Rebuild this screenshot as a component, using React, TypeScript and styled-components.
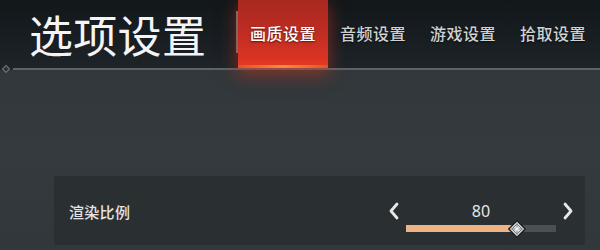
import { FC } from 'react';
import styled, { createGlobalStyle } from 'styled-components';

const GlobalStyle = createGlobalStyle`
  html, body {
    margin: 0;
    padding: 0;
    background: #31373a;
  }
  body {
    font-family: 'Noto Sans CJK SC', 'Noto Sans', sans-serif;
    color: #e8e8e8;
  }
`;

const Screen = styled.div`
  width: 600px;
  height: 250px;
  overflow: hidden;
  display: flex;
  flex-direction: column;
  background: linear-gradient(180deg, #2f3538 0%, #343a3d 60%, #31373a 100%);
`;

const Header = styled.header`
  height: 68px;
  display: flex;
  align-items: center;
  background: linear-gradient(180deg, #12171a 0%, #181e22 60%, #1e2428 100%);
`;

const Title = styled.h1`
  margin: 0;
  padding-left: 29px;
  width: 236px;
  box-sizing: border-box;
  font-size: 44px;
  font-weight: 400;
  line-height: 1;
  color: #f4f4f4;
  letter-spacing: 0.3px;
`;

const Separator = styled.div`
  width: 2px;
  height: 42px;
  background: #70767a;
  align-self: center;
  margin-top: -5px;
`;

const Tabs = styled.nav`
  display: flex;
  height: 100%;
`;

const Tab = styled.div<{ $active?: boolean }>`
  position: relative;
  width: 90px;
  height: 100%;
  display: flex;
  align-items: center;
  justify-content: center;
  font-size: 16px;
  font-weight: 500;
  letter-spacing: 0.5px;
  color: ${({ $active }) => ($active ? '#ffffff' : '#cfd1d2')};
  text-shadow: 0 1px 2px rgba(0, 0, 0, 0.6);
  background: ${({ $active }) =>
    $active
      ? 'linear-gradient(180deg, #a9291f 0%, #bd2c22 45%, #d93423 85%, #e53d22 100%)'
      : 'transparent'};
  box-shadow: ${({ $active }) =>
    $active ? '0 6px 16px 1px rgba(214, 52, 30, 0.5)' : 'none'};
  z-index: ${({ $active }) => ($active ? 1 : 0)};

  &::after {
    content: '';
    display: ${({ $active }) => ($active ? 'block' : 'none')};
    position: absolute;
    left: 0;
    right: 0;
    bottom: 0;
    height: 3px;
    background: linear-gradient(90deg, #e8501f, #ff8a3a 50%, #e8501f);
  }
`;

const TabLabel = styled.span`
  margin-top: -2px;
`;

const Divider = styled.div`
  height: 2px;
  display: flex;
  align-items: center;
  background: #1e2428;
`;

const DividerMark = styled.svg`
  width: 10px;
  height: 10px;
  margin-left: 1px;
  flex: none;
`;

const DividerLine = styled.div`
  flex: 1;
  height: 2px;
  margin-left: 2px;
  background: #5d6367;
`;

const Body = styled.main`
  flex: 1;
  padding: 106px 15px 0 54px;
`;

const Row = styled.div`
  height: 69px;
  display: flex;
  align-items: center;
  justify-content: space-between;
  padding: 0 9px 0 15px;
  background: #2a2f32;
`;

const Label = styled.span`
  font-size: 15px;
  font-weight: 500;
  color: #e4e4e4;
  letter-spacing: 0.3px;
  margin-top: 2px;
`;

const Stepper = styled.div`
  display: flex;
  align-items: flex-start;
  gap: 4px;
  margin-top: 12px;
`;

const ArrowButton = styled.button`
  border: 0;
  padding: 0;
  width: 16px;
  height: 20px;
  background: none;
  display: flex;
  align-items: center;
  justify-content: center;
  cursor: pointer;
`;

const SliderColumn = styled.div`
  width: 150px;
  display: flex;
  flex-direction: column;
  align-items: center;
`;

const Value = styled.span`
  font-family: 'Noto Sans', 'Noto Sans CJK SC', sans-serif;
  font-size: 16px;
  line-height: 20px;
  color: #e6e6e6;
`;

const Track = styled.div`
  position: relative;
  width: 100%;
  height: 7px;
  margin-top: 4px;
  background: #4a5053;
`;

const Fill = styled.div`
  height: 100%;
  background: #eeb385;
`;

const Thumb = styled.svg`
  position: absolute;
  top: 50%;
  width: 18px;
  height: 18px;
  transform: translate(-50%, -50%);
`;

const Chevron: FC<{ dir: 'left' | 'right' }> = ({ dir }) => (
  <svg width="12" height="18" viewBox="0 0 12 18">
    <path
      d={dir === 'left' ? 'M9 2 L3 9 L9 16' : 'M3 2 L9 9 L3 16'}
      fill="none"
      stroke="#e8e8e8"
      strokeWidth="2.8"
      strokeLinecap="round"
      strokeLinejoin="round"
    />
  </svg>
);

const Slider: FC<{ value: number; fraction: number }> = ({ value, fraction }) => (
  <Stepper>
    <ArrowButton>
      <Chevron dir="left" />
    </ArrowButton>
    <SliderColumn>
      <Value>{value}</Value>
      <Track>
        <Fill style={{ width: `${fraction * 100}%` }} />
        <Thumb viewBox="0 0 18 18" style={{ left: `${fraction * 100}%` }}>
          <path d="M9 0.8 L17.2 9 L9 17.2 L0.8 9 Z" fill="#d9dde0" stroke="#1c2023" strokeWidth="1.4" />
          <path d="M9 4 L14 9 L9 14 L4 9 Z" fill="none" stroke="#6d7478" strokeWidth="1" />
          <path d="M9 3 V15 M3 9 H15" stroke="#8a9195" strokeWidth="1" />
          <circle cx="9" cy="9" r="1.6" fill="#f4f6f7" />
        </Thumb>
      </Track>
    </SliderColumn>
    <ArrowButton>
      <Chevron dir="right" />
    </ArrowButton>
  </Stepper>
);

const tabs = ['画质设置', '音频设置', '游戏设置', '拾取设置'];

const App: FC = () => (
  <>
    <GlobalStyle />
    <Screen>
      <Header>
        <Title>选项设置</Title>
        <Separator />
        <Tabs>
          {tabs.map((t, i) => (
            <Tab key={t} $active={i === 0}>
              <TabLabel>{t}</TabLabel>
            </Tab>
          ))}
        </Tabs>
      </Header>
      <Divider>
        <DividerMark viewBox="0 0 10 10">
          <path d="M5 1.5 L8.5 5 L5 8.5 L1.5 5 Z" fill="#2a3034" stroke="#6a7074" strokeWidth="1.2" />
        </DividerMark>
        <DividerLine />
      </Divider>
      <Body>
        <Row>
          <Label>渲染比例</Label>
          <Slider value={80} fraction={0.74} />
        </Row>
      </Body>
    </Screen>
  </>
);

export default App;
